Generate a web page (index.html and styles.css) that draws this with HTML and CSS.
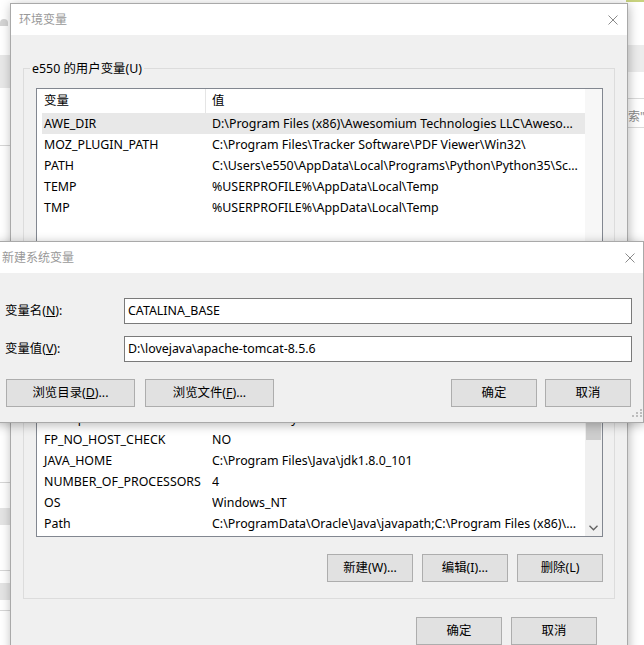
FILE: index.html
```html
<!DOCTYPE html>
<html lang="zh-CN">
<head>
<meta charset="utf-8">
<title>环境变量</title>
<link rel="stylesheet" href="styles.css">
</head>
<body>
<div class="backapp">
  <div class="bpane bleft">
    <div class="bl-arc"></div>
    <div class="bl-band1"></div>
    <div class="bl-line1"></div>
    <div class="bl-line2"></div>
    <div class="bl-band2"></div>
    <div class="bl-line3"></div>
    <div class="bl-band3"></div>
    <div class="bl-line4"></div>
  </div>
  <div class="bpane bright">
    <div class="br-top"></div>
    <div class="br-band1"></div>
    <div class="br-line1"></div>
    <div class="br-text">索"a</div>
    <div class="br-line2"></div>
  </div>
</div>

<div class="win envwin">
  <div class="titlebar">
    <span class="ttl">环境变量</span>
    <svg class="xbtn" width="10" height="10" viewBox="0 0 10 10"><path d="M0.5 0.5L9.5 9.5M9.5 0.5L0.5 9.5" stroke="#8a8a8a" stroke-width="1" fill="none"/></svg>
  </div>
  <div class="wbody">
    <fieldset class="grp grp-user">
      <legend>e550 的用户变量(U)</legend>
      <div class="gin">
        <div class="list list-user">
          <div class="lmain">
            <div class="lhead"><div class="hc1">变量</div><div class="hc2">值</div></div>
            <div class="rows">
              <div class="row sel"><span class="rc1">AWE_DIR</span><span class="rc2">D:\Program Files (x86)\Awesomium Technologies LLC\Aweso...</span></div>
              <div class="row"><span class="rc1">MOZ_PLUGIN_PATH</span><span class="rc2">C:\Program Files\Tracker Software\PDF Viewer\Win32\</span></div>
              <div class="row"><span class="rc1">PATH</span><span class="rc2">C:\Users\e550\AppData\Local\Programs\Python\Python35\Sc...</span></div>
              <div class="row"><span class="rc1">TEMP</span><span class="rc2">%USERPROFILE%\AppData\Local\Temp</span></div>
              <div class="row"><span class="rc1">TMP</span><span class="rc2">%USERPROFILE%\AppData\Local\Temp</span></div>
            </div>
          </div>
          <div class="vs vs-off"></div>
        </div>
      </div>
    </fieldset>

    <fieldset class="grp grp-sys">
      <legend>系统变量(S)</legend>
      <div class="gin">
        <div class="list list-sys">
          <div class="lmain">
            <div class="lhead"><div class="hc1">变量</div><div class="hc2">值</div></div>
            <div class="rows rows-end">
              <div class="row"><span class="rc1">ComSpec</span><span class="rc2">C:\Windows\system32\cmd.exe</span></div>
              <div class="row"><span class="rc1">FP_NO_HOST_CHECK</span><span class="rc2">NO</span></div>
              <div class="row"><span class="rc1">JAVA_HOME</span><span class="rc2">C:\Program Files\Java\jdk1.8.0_101</span></div>
              <div class="row"><span class="rc1">NUMBER_OF_PROCESSORS</span><span class="rc2">4</span></div>
              <div class="row"><span class="rc1">OS</span><span class="rc2">Windows_NT</span></div>
              <div class="row"><span class="rc1">Path</span><span class="rc2">C:\ProgramData\Oracle\Java\javapath;C:\Program Files (x86)\...</span></div>
            </div>
          </div>
          <div class="vs">
            <div class="vs-track"><div class="vs-thumb"></div></div>
            <div class="vs-down"><svg width="9" height="6" viewBox="0 0 9 6"><path d="M0.5 0.8L4.5 4.8L8.5 0.8" stroke="#606060" stroke-width="1.3" fill="none"/></svg></div>
          </div>
        </div>
        <div class="btnrow">
          <button class="btn">新建(W)...</button>
          <button class="btn">编辑(I)...</button>
          <button class="btn">删除(L)</button>
        </div>
      </div>
    </fieldset>

    <div class="btnrow mainbtns">
      <button class="btn">确定</button>
      <button class="btn">取消</button>
    </div>
  </div>
</div>

<div class="win newwin">
  <div class="titlebar">
    <span class="ttl">新建系统变量</span>
    <svg class="xbtn" width="10" height="10" viewBox="0 0 10 10"><path d="M0.5 0.5L9.5 9.5M9.5 0.5L0.5 9.5" stroke="#8a8a8a" stroke-width="1" fill="none"/></svg>
  </div>
  <div class="nbody">
    <div class="form">
      <label class="flabel">变量名(<u>N</u>):</label>
      <div class="inp">CATALINA_BASE</div>
      <label class="flabel">变量值(<u>V</u>):</label>
      <div class="inp">D:\lovejava\apache-tomcat-8.5.6</div>
    </div>
    <div class="nbtns">
      <div class="nleft">
        <button class="btn wide">浏览目录(<u>D</u>)...</button>
        <button class="btn wide">浏览文件(<u>F</u>)...</button>
      </div>
      <div class="nright">
        <button class="btn">确定</button>
        <button class="btn">取消</button>
      </div>
    </div>
  </div>
  <svg class="grip" width="10" height="10" viewBox="0 0 10 10">
    <rect x="8" y="0" width="2" height="2" fill="#bdbdbd"/>
    <rect x="4" y="3" width="2" height="2" fill="#bdbdbd"/>
    <rect x="8" y="3" width="2" height="2" fill="#bdbdbd"/>
    <rect x="0" y="6" width="2" height="2" fill="#bdbdbd"/>
    <rect x="4" y="6" width="2" height="2" fill="#bdbdbd"/>
    <rect x="8" y="6" width="2" height="2" fill="#bdbdbd"/>
  </svg>
</div>
</body>
</html>
```

FILE: styles.css
```css
* { box-sizing: border-box; margin: 0; padding: 0; }
html, body { width: 644px; height: 645px; overflow: hidden; }
body {
  position: relative;
  background: #fff;
  font-family: "Noto Sans", "Noto Sans CJK SC", sans-serif;
  font-size: 12.4px;
  color: #000;
}

/* background application */
.backapp {
  position: absolute;
  inset: 0;
  display: flex;
  justify-content: space-between;
  background: #fff;
}
.bpane { display: flex; flex-direction: column; }
.bleft { width: 12px; }
.bright { width: 18px; }
.bl-arc { margin-top: 19px; width: 8px; height: 7px; border-radius: 4px 4px 0 0; background: #d4d4d4; }
.bl-band1 { margin-top: 29px; height: 33px; background: #e8e8e8; }
.bl-line1 { margin-top: 57px; height: 1px; background: #d6d6d6; }
.bl-line2 { margin-top: 336px; height: 1px; background: #d6d6d6; }
.bl-band2 { margin-top: 25px; height: 17px; background: #e4e4e4; }
.bl-line3 { margin-top: 45px; height: 1px; background: #d6d6d6; }
.bl-band3 { margin-top: 12px; height: 17px; background: #e4e4e4; }
.bl-line4 { margin-top: 10px; height: 1px; background: #d6d6d6; }
.br-top { height: 2px; background: #c8d27e; }
.br-band1 { margin-top: 43px; height: 27px; background: #ececec; }
.br-line1 { margin-top: 26px; height: 1px; background: #dadada; }
.br-text { margin-top: 10px; height: 16px; line-height: 16px; color: #8a8a8a; font-size: 12px; white-space: nowrap; overflow: hidden; padding-left: 2px; }
.br-line2 { margin-top: 2px; height: 1px; background: #dadada; }

/* windows */
.win {
  position: absolute;
  background: #f0f0f0;
  border: 1px solid #a9a9a9;
  box-shadow: 1px 2px 10px rgba(0, 0, 0, 0.28);
}
.envwin { left: 10px; top: 3px; width: 618px; height: 680px; }
.newwin { left: -6px; top: 241px; width: 650px; height: 182px; }

.titlebar {
  height: 31px;
  background: #fff;
  display: flex;
  align-items: center;
  justify-content: space-between;
  padding: 0 9px 0 8px;
}
.ttl { color: #999; font-size: 12px; line-height: 16px; }
.newwin .titlebar { padding: 0 8px 0 7px; }

.wbody { padding: 25px 12px 0 12px; }

.grp { border: 1px solid #dcdcdc; }
.grp legend {
  margin-left: 6px;
  padding: 0 2px;
  line-height: 17px;
  height: 17px;
  font-size: inherit;
}
.grp-user { height: 220px; overflow: hidden; }
.grp-sys { margin-top: 10px; }
.gin { padding: 11px 11px 16px 12px; }
.grp-user .gin { padding-bottom: 0; }

.list {
  border: 1px solid #828790;
  background: #fff;
  display: flex;
}
.list-user { height: 170px; }
.list-sys { height: 219px; }
.lmain { flex: 1; display: flex; flex-direction: column; overflow: hidden; }
.lhead { height: 24px; display: flex; flex: none; line-height: 24px; }
.hc1 { width: 169px; padding-left: 7px; border-right: 1px solid #e5e5e5; }
.hc2 { flex: 1; padding-left: 6px; }
.rows { flex: 1; display: flex; flex-direction: column; overflow: hidden; }
.rows-end { justify-content: flex-end; padding-bottom: 2px; }
.row {
  flex: none;
  height: 21px;
  line-height: 21px;
  display: flex;
  margin-left: 5px;
  white-space: nowrap;
}
.row.sel { background: #e8e8e8; }
.rc1 { width: 170px; padding-left: 2px; flex: none; overflow: hidden; }
.rc2 { flex: 1; overflow: hidden; }

.vs { width: 17px; flex: none; background: #f0f0f0; display: flex; flex-direction: column; }
.vs-off { background: #f7f7f7; }
.vs-track { flex: 1; display: flex; flex-direction: column; justify-content: flex-end; padding: 0 1px 79px 1px; }
.vs-thumb { height: 40px; background: #cdcdcd; }
.vs-down { height: 17px; display: flex; align-items: center; justify-content: center; }

.btnrow { display: flex; justify-content: flex-end; gap: 9px; margin-top: 17px; }
.btn {
  width: 86px;
  height: 28px;
  background: #e1e1e1;
  border: 1px solid #adadad;
  font-family: inherit;
  font-size: inherit;
  color: #000;
  line-height: 24px;
}
.btn.wide { width: 129px; }
.mainbtns { margin-top: 18px; padding-right: 18px; }

/* new variable dialog */
.nbody { padding: 25px 11px 0 10px; }
.form {
  display: grid;
  grid-template-columns: 119px 1fr;
  row-gap: 12px;
  align-items: center;
}
.flabel { line-height: 18px; }
.inp {
  height: 26px;
  border: 1px solid #7a7a7a;
  background: #fff;
  padding-left: 3px;
  line-height: 24px;
  white-space: nowrap;
}
.nbtns { display: flex; justify-content: space-between; margin-top: 17px; padding-right: 1px; padding-left: 1px; }
.nleft { display: flex; gap: 10px; }
.nright { display: flex; gap: 8px; }
.grip { position: absolute; right: 1px; bottom: 3px; }
```
